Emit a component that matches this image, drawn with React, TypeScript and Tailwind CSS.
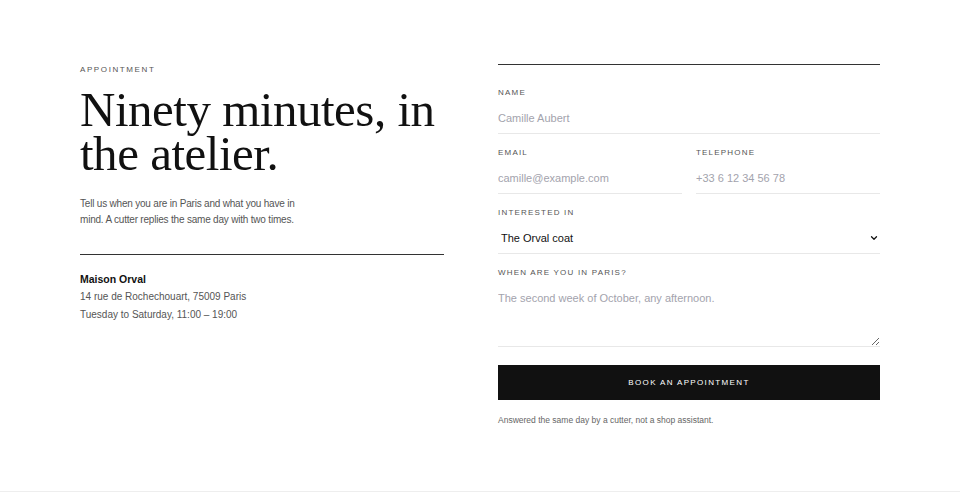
import { ChevronDown } from "lucide-react";

const sans = { fontFamily: "'Liberation Sans', Arial, sans-serif" };

function Label({ children }: { children: React.ReactNode }) {
  return (
    <label className="block text-[8px] leading-[10px] uppercase tracking-[0.15em] text-[#555]">{children}</label>
  );
}

const field =
  "mt-[10px] block w-full border-b border-[#e8e8e8] pt-[3px] pb-[8px] text-[11px] leading-[14px] outline-none placeholder:text-[#a3a3ad]";

export default function App() {
  return (
    <div className="min-h-[492px] bg-white border-b border-[#eee]" style={sans}>
      <div className="mx-auto grid w-[800px] grid-cols-[364px_382px] gap-[54px] pt-[64px]">
        <div className="pt-[1px]">
          <p className="text-[8px] leading-[10px] uppercase tracking-[0.2em] text-[#555]">Appointment</p>
          <h1
            className="mt-[13px] text-[49px] leading-[44px] tracking-[-0.01em] text-[#111]"
            style={{ fontFamily: "'Liberation Serif', 'Times New Roman', serif" }}
          >
            Ninety minutes, in the atelier.
          </h1>
          <p className="mt-[20px] w-[232px] text-[10px] leading-[16px] tracking-[-0.02em] text-[#555]">
            Tell us when you are in Paris and what you have in mind. A cutter replies the same day with two times.
          </p>
          <div className="mt-[26px] border-t border-[#333]" />
          <div className="mt-[15px] text-[10px] leading-[18px] text-[#555]">
            <p className="text-[10.5px] font-bold text-[#111]">Maison Orval</p>
            <p>14 rue de Rochechouart, 75009 Paris</p>
            <p>Tuesday to Saturday, 11:00 – 19:00</p>
          </div>
        </div>

        <form className="border-t border-[#333]" onSubmit={(e) => e.preventDefault()}>
          <div className="pt-[23px]">
            <Label>Name</Label>
            <input placeholder="Camille Aubert" className={field} />
          </div>
          <div className="mt-[14px] grid grid-cols-2 gap-[14px]">
            <div>
              <Label>Email</Label>
              <input placeholder="camille@example.com" className={field} />
            </div>
            <div>
              <Label>Telephone</Label>
              <input placeholder="+33 6 12 34 56 78" className={field} />
            </div>
          </div>
          <div className="mt-[14px]">
            <Label>Interested in</Label>
            <div className="mt-[10px] flex items-center justify-between border-b border-[#e8e8e8] pt-[3px] pb-[8px] pl-[3px] pr-[1px]">
              <span className="text-[11px] leading-[14px] text-[#111]">The Orval coat</span>
              <ChevronDown size={10} strokeWidth={3} className="text-[#111]" />
            </div>
          </div>
          <div className="mt-[14px]">
            <Label>When are you in Paris?</Label>
            <textarea
              placeholder="The second week of October, any afternoon."
              className="mt-[10px] block h-[59px] w-full resize-y border-b border-[#e8e8e8] pt-[3px] text-[11px] leading-[14px] outline-none placeholder:text-[#a3a3ad]"
            />
          </div>
          <button
            type="submit"
            className="mt-[18px] block h-[35px] w-full bg-[#111] text-[8px] uppercase tracking-[0.17em] text-white"
          >
            Book an appointment
          </button>
          <p className="mt-[13px] text-[8.5px] leading-[14px] text-[#666]">
            Answered the same day by a cutter, not a shop assistant.
          </p>
        </form>
      </div>
    </div>
  );
}
